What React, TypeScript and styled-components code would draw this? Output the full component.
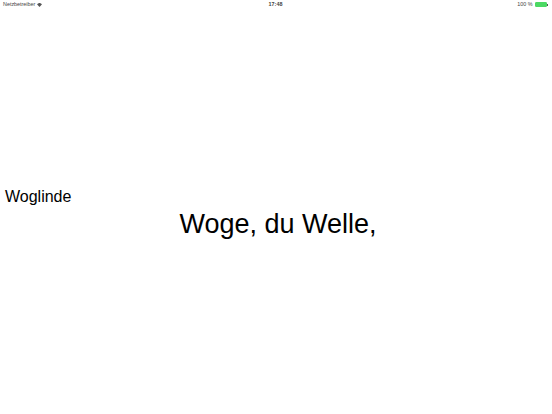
import React from "react";
import styled, { createGlobalStyle } from "styled-components";

const Global = createGlobalStyle`
  html, body { margin: 0; padding: 0; background: #fff; }
  body { font-family: "Liberation Sans", Arial, sans-serif; color: #000; }
`;

const Page = styled.div`
  width: 552px;
  height: 414px;
  display: flex;
  flex-direction: column;
  background: #fff;
  overflow: hidden;
`;

const StatusBar = styled.div`
  height: 9px;
  display: grid;
  grid-template-columns: 1fr auto 1fr;
  align-items: center;
  padding: 0 4px 0 3px;
  font-size: 5.4px;
  line-height: 9px;
  color: #444;
`;

const Side = styled.div<{ $end?: boolean }>`
  display: flex;
  align-items: center;
  gap: 2px;
  justify-content: ${(p) => (p.$end ? "flex-end" : "flex-start")};
`;

const Clock = styled.div`
  font-weight: 600;
  text-align: center;
`;

const Battery = styled.div`
  display: flex;
  align-items: center;
  gap: 0.5px;
`;

const BatteryBody = styled.div`
  width: 10px;
  height: 3px;
  border: 0.5px solid #4cd964;
  background: #4cd964;
  border-radius: 1px;
`;

const BatteryTip = styled.div`
  width: 1px;
  height: 2px;
  background: #555;
`;

const Content = styled.div`
  padding-top: 179px;
  display: flex;
  flex-direction: column;
`;

const Speaker = styled.div`
  font-size: 16px;
  line-height: 18px;
  padding-left: 5px;
  height: 18px;
`;

const Line = styled.div`
  margin-top: 3px;
  padding-left: 4px;
  font-size: 27px;
  line-height: 31px;
  text-align: center;
`;

const Wifi = () => (
  <svg width="5" height="4" viewBox="0 0 10 8">
    <path d="M5 8 L0 2.5 A7 7 0 0 1 10 2.5 Z" fill="#555" />
  </svg>
);

export default function App() {
  return (
    <>
      <Global />
      <Page>
        <StatusBar>
          <Side>
            <span>Netzbetreiber</span>
            <Wifi />
          </Side>
          <Clock>17:48</Clock>
          <Side $end>
            <span>100 %</span>
            <Battery>
              <BatteryBody />
              <BatteryTip />
            </Battery>
          </Side>
        </StatusBar>
        <Content>
          <Speaker>Woglinde</Speaker>
          <Line>Woge, du Welle,</Line>
        </Content>
      </Page>
    </>
  );
}
